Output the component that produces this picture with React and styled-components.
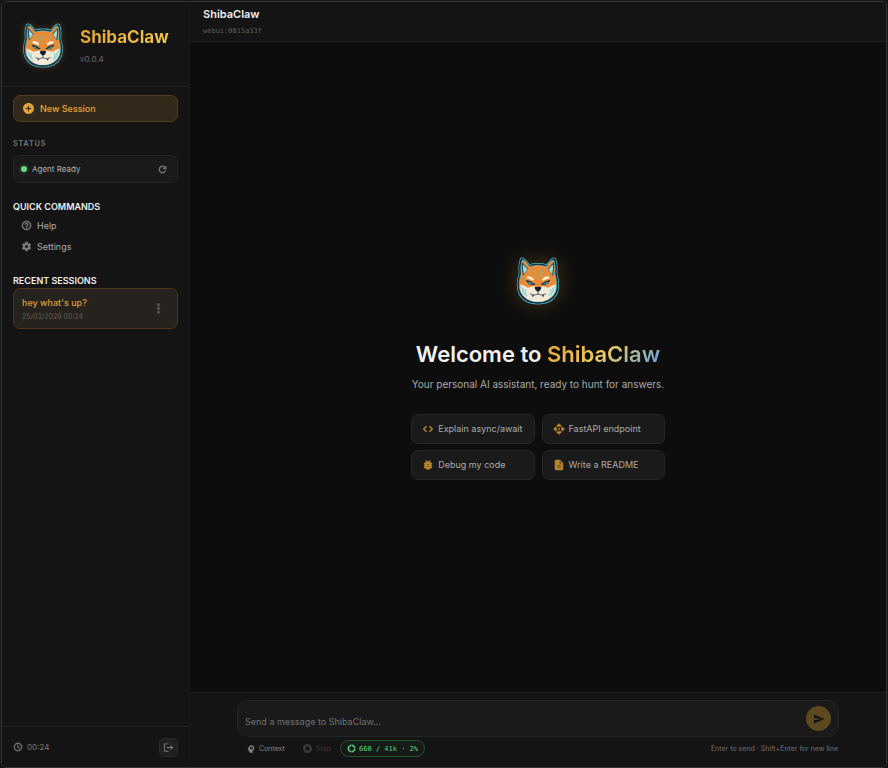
import React, { useState } from 'react'
import styled, { createGlobalStyle, css } from 'styled-components'
import {
  MdAddCircle,
  MdApi,
  MdBugReport,
  MdCode,
  MdDescription,
  MdDonutLarge,
  MdHelpOutline,
  MdLogout,
  MdMoreVert,
  MdPsychology,
  MdRefresh,
  MdSchedule,
  MdSend,
  MdSettings,
  MdStopCircle
} from 'react-icons/md'

const suggestions = [
  { icon: MdCode, text: 'Explain async/await' },
  { icon: MdApi, text: 'FastAPI endpoint' },
  { icon: MdBugReport, text: 'Debug my code' },
  { icon: MdDescription, text: 'Write a README' }
]

const HEAD =
  'M46 31 Q51 28 57 35 L69 49 Q94 42 119 49 L131 35 Q137 28 142 31 Q148 47 145 72 Q155 103 147 126 Q133 156 94 156 Q55 156 41 126 Q33 103 43 72 Q40 47 46 31Z'

const ShibaLogo = ({ large }) => (
  <LogoSvg viewBox="32 25 124 136" $large={large} role="img" aria-label="ShibaClaw logo">
    {/* outline of the head, three rings */}
    <g strokeLinejoin="round">
      <path d={HEAD} fill="#47b9c4" stroke="#47b9c4" strokeWidth="7" />
      <path d={HEAD} fill="#12283f" stroke="#12283f" strokeWidth="3" />
      <path d={HEAD} fill="#e98a35" stroke="#5cc5ca" strokeWidth="2" transform="translate(6 6) scale(.936)" />
    </g>
    {/* ears */}
    <path d="M49 39 L66 58 L52 78 Q46 55 49 39Z" fill="#1d5066" />
    <path d="M52 46 L64 60 L54 74 Q50 58 52 46Z" fill="#a5dccd" />
    <path d="M139 39 L122 58 L136 78 Q142 55 139 39Z" fill="#1d5066" />
    <path d="M136 46 L124 60 L134 74 Q138 58 136 46Z" fill="#a5dccd" />
    {/* cheeks and muzzle */}
    <path
      d="M44 102 Q54 104 66 112 L82 107 Q94 98 106 107 L122 112 Q134 104 144 102 Q147 128 128 141 Q112 152 94 152 Q76 152 60 141 Q41 128 44 102Z"
      fill="#f3e9d9"
    />
    <path d="M45 105 Q49 130 63 140 L56 118Z M143 105 Q139 130 125 140 L132 118Z" fill="#a4e2db" />
    <path d="M85 98 L94 83 L103 98 L104 109 L94 114 L84 109Z" fill="#eb8a37" />
    {/* circuit lines on the forehead */}
    <g fill="none" stroke="#9cae7c" strokeWidth="2">
      <path d="M94 60 V89 M87 61 V76 L80 82 M101 61 V76 L108 82 M80 64 V72 L69 76 M108 64 V72 L119 76" />
      <path d="M62 75 L55 84 V95 M126 75 L133 84 V95 M75 61 L67 68 M113 61 L121 68" />
      <path d="M51 113 V124 L57 130 M59 116 V128 L65 135 M137 113 V124 L131 130 M129 116 V128 L123 135" stroke="#67cfcb" />
    </g>
    {/* brows */}
    <path d="M63 80 Q75 78 83 88 L80 92 Q70 87 62 86Z M125 80 Q113 78 105 88 L108 92 Q118 87 126 86Z" fill="#ffedd2" />
    {/* eyes */}
    <path d="M59 90 Q72 91 87 103 Q70 110 59 90Z M129 90 Q116 91 101 103 Q118 110 129 90Z" fill="#102b43" />
    <path d="M64 95 Q73 96 81 102 Q70 105 64 95Z M124 95 Q115 96 107 102 Q118 105 124 95Z" fill="#4db8cc" />
    <circle cx="74" cy="99" r="2" fill="#102b43" />
    <circle cx="114" cy="99" r="2" fill="#102b43" />
    {/* nose and mouth */}
    <path d="M84 111 Q94 107 104 111 Q103 120 94 124 Q85 120 84 111Z" fill="#101d30" />
    <path
      d="M94 123 V130 M72 130 Q84 136 94 130 Q104 136 116 130"
      fill="none"
      stroke="#172c3f"
      strokeWidth="2"
      strokeLinecap="round"
    />
    <path d="M77 132 L79 139 L83 134Z M111 132 L109 139 L105 134Z" fill="#172c3f" />
  </LogoSvg>
)

const App = () => {
  const [message, setMessage] = useState('')

  return (
    <Window>
      <GlobalStyle />
      <Sidebar>
        <Brand>
          <ShibaLogo />
          <div>
            <BrandName>ShibaClaw</BrandName>
            <Version>v0.0.4</Version>
          </div>
        </Brand>
        <SidebarBody>
          <NewSession type="button">
            <MdAddCircle size={13} />
            New Session
          </NewSession>
          <StatusLabel>STATUS</StatusLabel>
          <StatusCard>
            <StatusDot />
            <span>Agent Ready</span>
            <IconButton type="button" aria-label="Refresh status">
              <MdRefresh size={11} />
            </IconButton>
          </StatusCard>
          <SectionTitle>QUICK COMMANDS</SectionTitle>
          <Commands>
            <Command type="button">
              <MdHelpOutline size={11} />
              Help
            </Command>
            <Command type="button">
              <MdSettings size={11} />
              Settings
            </Command>
          </Commands>
          <SectionTitle>RECENT SESSIONS</SectionTitle>
          <Session>
            <SessionLink href="#session">
              <SessionName>hey what's up?</SessionName>
              <SessionDate>25/03/2026 00:24</SessionDate>
            </SessionLink>
            <IconButton type="button" aria-label="Session menu">
              <MdMoreVert size={15} />
            </IconButton>
          </Session>
        </SidebarBody>
        <SidebarFooter>
          <Clock>
            <MdSchedule size={10} />
            00:24
          </Clock>
          <LogoutButton type="button" aria-label="Log out">
            <MdLogout size={11} />
          </LogoutButton>
        </SidebarFooter>
      </Sidebar>

      <Main>
        <ChatHeader>
          <ChatTitle>ShibaClaw</ChatTitle>
          <ChatId>webui:0815a33f</ChatId>
        </ChatHeader>
        <Welcome>
          <ShibaLogo large />
          <WelcomeTitle>
            Welcome to <span>ShibaClaw</span>
          </WelcomeTitle>
          <WelcomeText>Your personal AI assistant, ready to hunt for answers.</WelcomeText>
          <Suggestions>
            {suggestions.map(({ icon: Icon, text }) => (
              <Suggestion type="button" key={text}>
                <Icon size={12} />
                {text}
              </Suggestion>
            ))}
          </Suggestions>
        </Welcome>
        <Composer>
          <ComposerInner>
            <InputBox>
              <MessageInput
                rows={1}
                aria-label="Message"
                placeholder="Send a message to ShibaClaw..."
                value={message}
                onChange={e => setMessage(e.target.value)}
              />
              <SendButton type="button" aria-label="Send">
                <MdSend size={12} />
              </SendButton>
            </InputBox>
            <Tools>
              <ToolButton type="button">
                <MdPsychology size={10} />
                Context
              </ToolButton>
              <ToolButton type="button" disabled>
                <MdStopCircle size={11} />
                Stop
              </ToolButton>
              <Tokens>
                <MdDonutLarge size={9} />
                660 / 41k · 2%
              </Tokens>
              <Hint>Enter to send · Shift+Enter for new line</Hint>
            </Tools>
          </ComposerInner>
        </Composer>
      </Main>
    </Window>
  )
}

const GlobalStyle = createGlobalStyle`
  * {
    box-sizing: border-box;
  }
  body {
    margin: 0;
    background: #161616;
    color: #aaa;
    font-family: Inter, 'Liberation Sans', sans-serif;
    font-size: 9px;
  }
  button {
    margin: 0;
    padding: 0;
    border: 0;
    background: none;
    color: inherit;
    font: inherit;
    cursor: pointer;
  }
  svg {
    flex: none;
  }
`

const panelBorder = css`1px solid #212121`

// the icon set is thin at these sizes
const boldIcon = css`
  svg {
    stroke-width: 1;
  }
  svg [fill='none'] {
    stroke: none;
  }
`

const Window = styled.div`
  display: flex;
  height: calc(100vh - 1px);
  margin: 1px 1px 0;
  border: 1px solid #363636;
  border-radius: 6px;
  background: #0d0d0d;
  overflow: hidden;
`

const Sidebar = styled.aside`
  display: flex;
  flex-direction: column;
  flex: none;
  width: 188px;
  border-right: 1px solid #1a1a1a;
  background: #141414;
`

const Brand = styled.div`
  display: flex;
  align-items: center;
  gap: 16px;
  height: 85px;
  padding: 2px 20px 0;
  border-bottom: ${panelBorder};
`

const LogoSvg = styled.svg`
  display: block;
  width: ${p => (p.$large ? 44 : 42)}px;
  height: ${p => (p.$large ? 48 : 45)}px;
  filter: drop-shadow(0 0 ${p => (p.$large ? '10px' : '3px')} rgba(232, 168, 48, 0.25));
`

const BrandName = styled.div`
  background: linear-gradient(135deg, #e5a32e, #f0c755);
  background-clip: text;
  color: transparent;
  font-size: 17px;
  font-weight: 700;
  line-height: 24px;
`

const Version = styled.div`
  margin-top: 4px;
  color: #686868;
  font-size: 8px;
  line-height: 12px;
`

const SidebarBody = styled.div`
  display: flex;
  flex-direction: column;
  flex: 1;
  padding: 8px 11px;
`

const NewSession = styled.button`
  display: flex;
  align-items: center;
  gap: 5px;
  height: 27px;
  padding: 0 8px;
  border: 1px solid #513d1b;
  border-radius: 7px;
  background: #33291a;
  color: #e5a536;
  font-size: 9px;
  font-weight: 500;
`

const StatusLabel = styled.div`
  margin: 16px 0 6px;
  color: #777;
  font-size: 7px;
  font-weight: 600;
  letter-spacing: 1px;
  line-height: 11px;
`

const StatusCard = styled.div`
  display: flex;
  align-items: center;
  gap: 5px;
  height: 28px;
  padding: 0 9px 0 7px;
  border: 1px solid #242424;
  border-radius: 7px;
  background: #1a1a1a;
  color: #b0b0b0;
  font-size: 8px;
`

const StatusDot = styled.span`
  width: 6px;
  height: 6px;
  border-radius: 50%;
  background: #69d77f;
  box-shadow: 0 0 4px rgba(105, 215, 127, 0.4);
`

const IconButton = styled.button`
  display: flex;
  margin-left: auto;
  color: #777;
  ${boldIcon}
`

const SectionTitle = styled.h2`
  margin: 17px 0 0;
  color: #eee;
  font-size: 9px;
  font-weight: 600;
  line-height: 14px;
`

const Commands = styled.div`
  display: flex;
  flex-direction: column;
  padding-top: 1px;
`

const Command = styled.button`
  display: flex;
  align-items: center;
  gap: 5px;
  height: 21px;
  padding: 0 8px;
  color: #aaa;
  ${boldIcon}

  svg {
    color: #808080;
  }
`

const Session = styled.div`
  display: flex;
  align-items: center;
  height: 41px;
  padding: 0 11px 0 8px;
  border: 1px solid #4a3719;
  border-radius: 7px;
  background: #26221d;

  ${IconButton} {
    color: #5b5751;
  }
`

const SessionLink = styled.a`
  text-decoration: none;
`

const SessionName = styled.div`
  color: #dba036;
  font-weight: 500;
  line-height: 13px;
`

const SessionDate = styled.div`
  margin-top: 3px;
  color: #625e58;
  font-size: 7px;
  line-height: 10px;
`

const SidebarFooter = styled.div`
  display: flex;
  align-items: center;
  justify-content: space-between;
  height: 41px;
  padding: 0 11px;
  border-top: ${panelBorder};
`

const Clock = styled.div`
  display: flex;
  align-items: center;
  gap: 4px;
  color: #777;
  font-size: 8px;
  ${boldIcon}
`

const LogoutButton = styled.button`
  display: flex;
  align-items: center;
  justify-content: center;
  width: 19px;
  height: 19px;
  border: 1px solid #292929;
  border-radius: 5px;
  background: #202020;
  color: #808080;
`

const Main = styled.main`
  display: flex;
  flex-direction: column;
  flex: 1;
  min-width: 0;
`

const ChatHeader = styled.header`
  height: 40px;
  padding: 5px 13px;
  border-bottom: ${panelBorder};
  background: #141414;
`

const ChatTitle = styled.div`
  color: #eee;
  font-size: 11px;
  font-weight: 600;
  line-height: 15px;
`

const ChatId = styled.div`
  margin-top: 4px;
  color: #5d5d5d;
  font-family: 'DejaVu Sans Mono', 'Liberation Mono', monospace;
  font-size: 7px;
  line-height: 10px;
`

const Welcome = styled.section`
  display: flex;
  flex-direction: column;
  align-items: center;
  justify-content: center;
  flex: 1;
  padding-top: 2px;
`

const WelcomeTitle = styled.h1`
  margin: 34px 0 0;
  color: #f0f0f0;
  font-size: 22px;
  font-weight: 600;
  line-height: 30px;

  span {
    background: linear-gradient(135deg, #e5a32e, #f0cc5c 50%, #5a9ff0);
    background-clip: text;
    color: transparent;
  }
`

const WelcomeText = styled.p`
  margin: 8px 0 0;
  color: #aaa;
  font-size: 10px;
  line-height: 14px;
`

const Suggestions = styled.div`
  display: grid;
  grid-template-columns: 1fr 1fr;
  gap: 6px 7px;
  margin-top: 23px;
`

const Suggestion = styled.button`
  display: flex;
  align-items: center;
  gap: 4px;
  height: 30px;
  padding: 0 11px 0 10px;
  border: 1px solid #252525;
  border-radius: 7px;
  background: #1a1a1a;
  color: #aaa;
  ${boldIcon}

  svg {
    color: #b8872b;
  }
`

const Composer = styled.footer`
  padding: 7px 47px 10px;
  border-top: ${panelBorder};
  background: #141414;
`

const ComposerInner = styled.div`
  max-width: 602px;
  margin: 0 auto;
`

const InputBox = styled.div`
  display: flex;
  align-items: center;
  height: 37px;
  padding: 0 7px;
  border: 1px solid #242424;
  border-radius: 11px;
  background: #1a1a1a;
`

const MessageInput = styled.textarea`
  flex: 1;
  height: 23px;
  padding: 7px 0 0;
  border: 0;
  outline: 0;
  background: none;
  color: #eee;
  font-family: inherit;
  font-size: 9px;
  line-height: 15px;
  resize: none;

  &::placeholder {
    color: #707070;
  }
`

const SendButton = styled.button`
  display: flex;
  align-items: center;
  justify-content: center;
  width: 25px;
  height: 25px;
  border-radius: 50%;
  background: #5e4820;
  color: #141414;
`

const Tools = styled.div`
  display: flex;
  align-items: center;
  margin-top: 3px;
  padding: 0 1px 0 9px;
  font-size: 7px;
`

const ToolButton = styled.button`
  display: flex;
  align-items: center;
  gap: 3px;
  margin-right: 17px;
  color: #858585;

  &:disabled {
    margin-right: 9px;
    color: #393939;
  }
`

const Tokens = styled.div`
  display: flex;
  align-items: center;
  gap: 3px;
  height: 17px;
  padding: 0 6px;
  border: 1px solid #265234;
  border-radius: 9px;
  background: #171b18;
  color: #59d47c;
  font-family: 'DejaVu Sans Mono', 'Liberation Mono', monospace;
  ${boldIcon}
`

const Hint = styled.div`
  margin-left: auto;
  color: #707070;
`

export default App
